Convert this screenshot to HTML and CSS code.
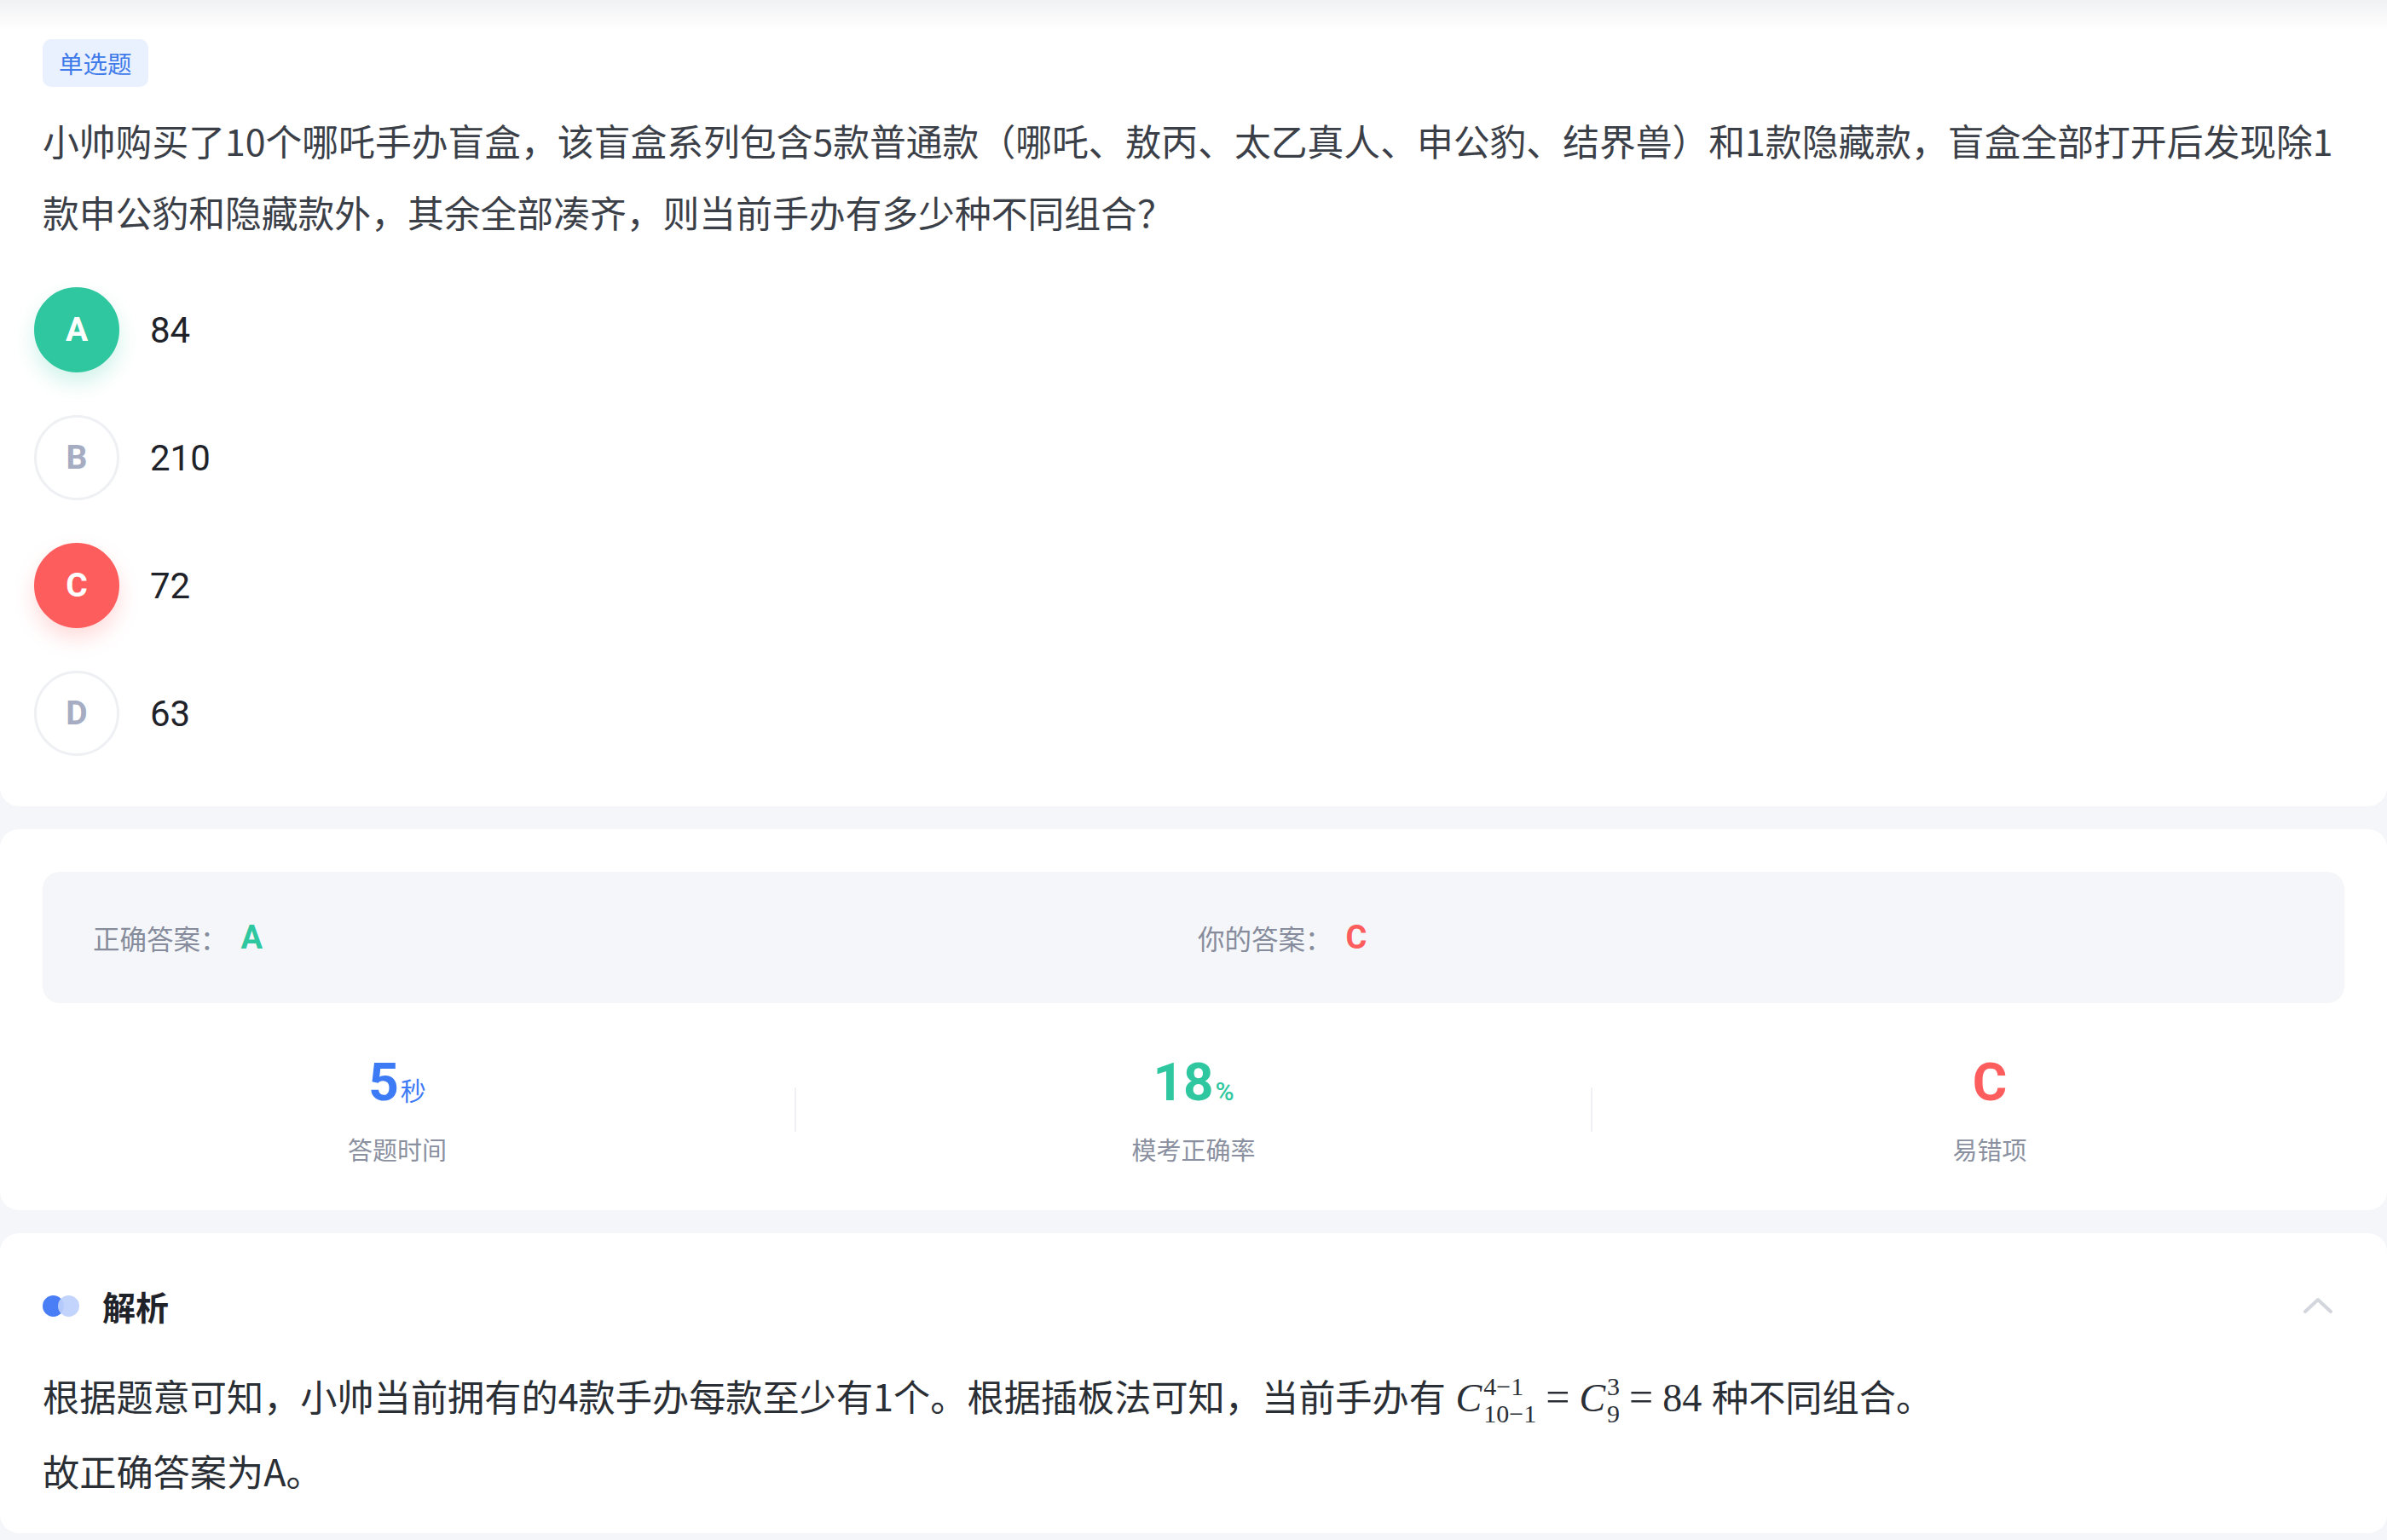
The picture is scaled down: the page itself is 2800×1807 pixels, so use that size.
FILE: index.html
```html
<!DOCTYPE html>
<html lang="zh-CN">
<head>
<meta charset="utf-8">
<title>单选题</title>
<link rel="stylesheet" href="styles.css">
</head>
<body>
<main class="page">
  <section class="card card-question">
    <span class="tag">单选题</span>
    <p class="question">小帅购买了10个哪吒手办盲盒，该盲盒系列包含5款普通款（哪吒、敖丙、太乙真人、申公豹、结界兽）和1款隐藏款，盲盒全部打开后发现除1款申公豹和隐藏款外，其余全部凑齐，则当前手办有多少种不同组合？</p>
    <ul class="options">
      <li class="option"><span class="letter letter-right">A</span><span class="value">84</span></li>
      <li class="option"><span class="letter">B</span><span class="value">210</span></li>
      <li class="option"><span class="letter letter-wrong">C</span><span class="value">72</span></li>
      <li class="option"><span class="letter">D</span><span class="value">63</span></li>
    </ul>
  </section>

  <section class="card card-result">
    <div class="answers">
      <div class="answer answer-first">正确答案：<b class="ok">A</b></div>
      <div class="answer">你的答案：<b class="bad">C</b></div>
    </div>
    <div class="stats">
      <div class="stat">
        <div class="stat-num blue">5<small>秒</small></div>
        <div class="stat-label">答题时间</div>
      </div>
      <div class="divider"></div>
      <div class="stat">
        <div class="stat-num green">18<small class="pct">%</small></div>
        <div class="stat-label">模考正确率</div>
      </div>
      <div class="divider"></div>
      <div class="stat">
        <div class="stat-num red">C</div>
        <div class="stat-label">易错项</div>
      </div>
    </div>
  </section>

  <section class="card card-analysis">
    <div class="analysis-head">
      <div class="head-left">
        <span class="dots"><span class="dot dot-a"></span><span class="dot dot-b"></span></span>
        <h2 class="head-title">解析</h2>
      </div>
      <svg class="chevron" width="36" height="20" viewBox="0 0 36 20" aria-hidden="true">
        <path d="M3 17 L18 3 L33 17" fill="none" stroke="#d3d6dd" stroke-width="4" stroke-linecap="round" stroke-linejoin="round"/>
      </svg>
    </div>
    <p class="analysis-text">根据题意可知，小帅当前拥有的4款手办每款至少有1个。根据插板法可知，当前手办有 <span class="math"><i>C</i><span class="supsub"><span class="sup">4−1</span><span class="sub">10−1</span></span><span class="op">=</span><i>C</i><span class="supsub"><span class="sup">3</span><span class="sub">9</span></span><span class="op">=</span>84</span> 种不同组合。</p>
    <p class="analysis-text">故正确答案为A。</p>
  </section>
</main>
</body>
</html>
```

FILE: styles.css
```css
* {
  box-sizing: border-box;
}

html, body {
  margin: 0;
  padding: 0;
}

body {
  background: #f5f6f9;
  font-family: "Noto Sans CJK SC", "Noto Sans", sans-serif;
  color: #1f2329;
  height: 1807px;
  overflow: hidden;
}

.page {
  display: flex;
  flex-direction: column;
  gap: 27px;
}

.card {
  background: #ffffff;
  border-radius: 22px;
  position: relative;
}

/* question card */
.card-question {
  border-radius: 0 0 22px 22px;
  padding: 46px 50px 34px 50px;
}

.card-question::before {
  content: "";
  position: absolute;
  left: 0;
  right: 0;
  top: 0;
  height: 36px;
  background: linear-gradient(to bottom, rgba(232, 233, 236, 0.6), rgba(255, 255, 255, 0));
  pointer-events: none;
}

.tag {
  display: inline-block;
  height: 56px;
  line-height: 56px;
  padding: 0 19px;
  border-radius: 10px;
  background: #e9f0fe;
  color: #3f7be9;
  font-size: 28.5px;
}

.question {
  margin: 20px 0 0 0;
  font-size: 42.8px;
  line-height: 84px;
  color: #3b4048;
}

.options {
  list-style: none;
  margin: 22px 0 0 -10px;
  padding: 0;
}

.option {
  height: 150px;
  display: flex;
  align-items: center;
  gap: 36px;
}

.letter {
  width: 100px;
  height: 100px;
  border-radius: 50%;
  border: 3px solid #eef0f4;
  display: flex;
  align-items: center;
  justify-content: center;
  font-family: Roboto, "Liberation Sans", sans-serif;
  font-weight: 700;
  font-size: 39px;
  color: #a6adc3;
  background: #ffffff;
}

.letter-right {
  background: #2fc79f;
  border-color: #2fc79f;
  color: #ffffff;
  box-shadow: 0 12px 24px rgba(47, 199, 159, 0.22);
}

.letter-wrong {
  background: #fd5d5d;
  border-color: #fd5d5d;
  color: #ffffff;
  box-shadow: 0 12px 24px rgba(253, 93, 93, 0.22);
}

.value {
  font-family: Roboto, "Liberation Sans", sans-serif;
  font-size: 42px;
  color: #1f2329;
}

/* result card */
.card-result {
  padding: 50px 0 52px 0;
}

.answers {
  margin: 0 50px;
  height: 154px;
  border-radius: 20px;
  background: #f5f6f9;
  display: grid;
  grid-template-columns: 1fr 1fr;
  align-items: center;
  font-size: 31.5px;
  color: #868c9c;
}

.answer {
  padding-left: 5px;
  display: flex;
  align-items: center;
}

.answer-first {
  padding-left: 59px;
}

.answer b {
  font-family: Roboto, "Liberation Sans", sans-serif;
  font-weight: 700;
  font-size: 38px;
  margin-left: 16px;
}

.ok { color: #2fc79f; }
.bad { color: #fd5d5d; }

.stats {
  display: flex;
  align-items: center;
  padding-top: 58px;
}

.stat {
  flex: 1;
  display: flex;
  flex-direction: column;
  align-items: center;
}

.divider {
  width: 2px;
  height: 52px;
  background: #f0f1f4;
  margin-top: 0;
}

.stat-num {
  font-family: Roboto, "Liberation Sans", sans-serif;
  font-weight: 700;
  font-size: 62px;
  line-height: 70px;
  height: 70px;
}

.stat-num small {
  font-family: "Noto Sans CJK SC", sans-serif;
  font-weight: 400;
  font-size: 30px;
  margin-left: 2px;
}

.stat-num small.pct {
  font-family: Roboto, sans-serif;
  font-size: 30px;
  font-weight: 500;
}

.blue { color: #3d7af5; }
.green { color: #2fc79f; }
.red { color: #fd5d5d; }

.stat-label {
  margin-top: 23px;
  font-size: 29px;
  line-height: 40px;
  color: #8a90a0;
}

/* analysis card */
.card-analysis {
  padding: 57px 50px 30px 50px;
}

.analysis-head {
  height: 56px;
  display: flex;
  align-items: center;
  justify-content: space-between;
}

.head-left {
  display: flex;
  align-items: center;
  gap: 26px;
}

.dots {
  position: relative;
  width: 44px;
  height: 25px;
  display: inline-block;
}

.dot {
  position: absolute;
  top: 0;
  width: 25px;
  height: 25px;
  border-radius: 50%;
}

.dot-a {
  left: 0;
  background: #4a7ef6;
}

.dot-b {
  left: 18px;
  background: rgba(190, 208, 252, 0.92);
}

.head-title {
  margin: 0;
  font-size: 39px;
  font-weight: 700;
  color: #1f2329;
  line-height: 56px;
}

.chevron {
  margin-right: 13px;
}

.analysis-text {
  margin: 0;
  font-size: 43.2px;
  line-height: 88px;
  color: #2a2e35;
}

.card-analysis .analysis-head + .analysis-text {
  margin-top: 33px;
}

.math {
  font-family: "Liberation Serif", "DejaVu Serif", serif;
  font-size: 46px;
  line-height: 1;
  white-space: nowrap;
  margin: 0 2px;
}

.math i {
  font-style: italic;
}

.supsub {
  display: inline-flex;
  flex-direction: column;
  vertical-align: 19px;
  font-size: 30px;
  line-height: 32px;
  margin-left: 2px;
}

.supsub .sup,
.supsub .sub {
  line-height: 32px;
  display: block;
}

.op {
  margin: 0 11px;
  font-size: 50px;
}
```
